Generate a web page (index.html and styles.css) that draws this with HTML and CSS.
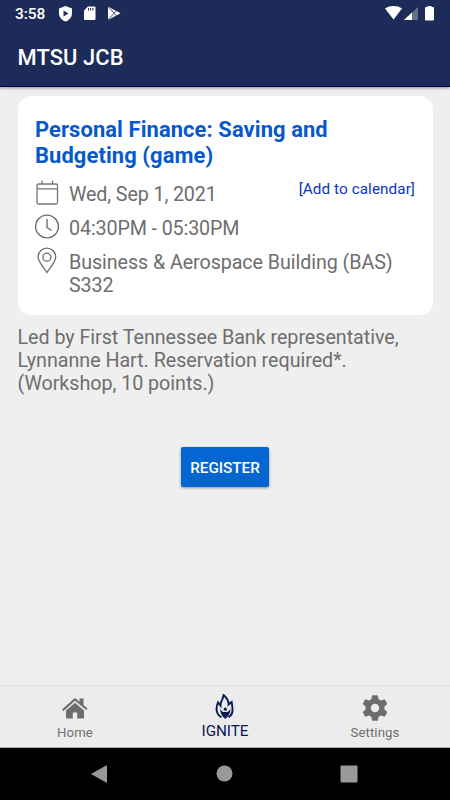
FILE: index.html
```html
<!DOCTYPE html>
<html lang="en">
<head>
<meta charset="utf-8">
<meta name="viewport" content="width=device-width, initial-scale=1">
<title>MTSU JCB</title>
<link rel="stylesheet" href="styles.css">
</head>
<body>
<div class="app">
  <header class="header">
    <div class="status">
      <span class="time">3:58</span>
      <svg class="status-left" width="64" height="16" viewBox="0 0 64 16" fill="#fff">
        <path d="M7.500 0 14 2.500V7c0 4.200-2.600 7.200-6.500 8.500C3.600 14.200 1 11.200 1 7V2.500z"/>
        <path d="M5.500 4.500v6l5-3z" fill="#1d2b59"/>
        <path d="M30 .5h6.500q1 0 1 1v11.500q0 1-1 1h-9.500q-1 0-1-1V4.500z"/>
        <path d="M30.500 2v2.500M32.700 2v2.500M34.900 2v2.500" stroke="#1d2b59" stroke-width="1"/>
        <path d="M50 .5 62.500 7.300 50 14z"/>
        <path d="m50 .5 8.500 9.500M50 14l8.500-9.500" stroke="#1d2b59" stroke-width=".8"/>
      </svg>
      <svg class="status-right" width="50" height="16" viewBox="0 0 50 16" fill="#fff">
        <path d="M0 2.500C4.500-.8 12.500-.8 17 2.500L8.500 13.500z"/>
        <path d="M33 1v13H19z" fill="#68708f"/>
        <path d="M27 6.500v7.500h-8z"/>
        <path d="M42.500 0h4v1H48q1 0 1 1v11.500q0 1-1 1h-7q-1 0-1-1V2q0-1 1-1h1.500z"/>
      </svg>
    </div>
    <h1 class="app-title">MTSU JCB</h1>
  </header>
  <main class="content">
    <section class="card">
      <h2 class="event-title">Personal Finance: Saving and<br>Budgeting (game)</h2>
      <div class="row date">
        <svg class="icon" width="26" height="28" viewBox="0 0 26 28" fill="none" stroke="#757575" stroke-width="1.300">
          <rect x="3" y="5" width="20.500" height="20" rx="1.500"/><path d="M3 9.800h20.500M8 1.500v3.500M18.500 1.500v3.500"/>
        </svg>
        <span class="text">Wed, Sep 1, 2021</span>
        <a class="add">[Add to calendar]</a>
      </div>
      <div class="row hours">
        <svg class="icon" width="26" height="28" viewBox="0 0 26 28" fill="none" stroke="#6c6c6c" stroke-width="1.400">
          <circle cx="13" cy="13.500" r="11.400"/><path d="M13 6v8.500l4.500 3"/>
        </svg>
        <span class="text">04:30PM - 05:30PM</span>
      </div>
      <div class="row place">
        <svg class="icon" width="26" height="28" viewBox="0 0 26 28" fill="none" stroke="#6c6c6c" stroke-width="1.300">
          <path d="M12.900 25.500C9.400 20.500 4.100 14.500 4.100 10a8.800 8.800 0 0 1 17.600 0c0 4.500-5.300 10.500-8.800 15.500z"/><circle cx="12.900" cy="10.200" r="4"/>
        </svg>
        <span class="text">Business &amp; Aerospace Building (BAS)<br>S332</span>
      </div>
    </section>
    <p class="description">Led by First Tennessee Bank representative,<br>Lynnanne Hart. Reservation required*.<br>(Workshop, 10 points.)</p>
    <button class="register">REGISTER</button>
  </main>
  <nav class="tabs">
    <a class="tab">
      <svg width="28" height="28" viewBox="0 0 28 28" fill="#6d6d6d">
        <path d="M1 15.500 13.200 4.500q.8-.7 1.600 0l3.700 3.200V4.500h4v6.600l4 3.400-1.300 1.600L14 6.700 2.300 17.200z"/>
        <path d="m14 8.800 9 7.700V23.500q0 1-1 1h-5.800v-6h-4.400v6H6q-1 0-1-1v-7z"/>
      </svg>
      <span>Home</span>
    </a>
    <a class="tab active">
      <svg width="28" height="28" viewBox="0 0 28 28" fill="#0b1a57">
        <path d="M10.500 23.300C5 20.500 4.500 14 7 8.300l2.500 3.200C9.300 7.500 12 5.500 12.600 1c3.200 3 5.300 5.500 5 9.500l3-2.500c.8 5.500 2.700 11.800-3 15.300" fill="none" stroke="#0b1a57" stroke-width="1.900"/>
        <path d="M9.100 14.500c.8 2.200 2.200 3.600 3.900 3.600h2.400c1.800 0 3-1.200 4-3.600.2 4.500-1.500 7.500-5.100 10.500-3.700-3-5.300-6-5.200-10.500z"/>
        <circle cx="14.300" cy="15.200" r="1.600"/>
      </svg>
      <span>IGNITE</span>
    </a>
    <a class="tab">
      <svg width="28" height="28" viewBox="0 0 28 28" fill="#6d6d6d" fill-rule="evenodd">
        <path d="M12 1.200h4q.9 0 1 .9l.5 3 2.400 1.400 2.900-1.100q.8-.3 1.200.4l2 3.500q.4.700-.2 1.300l-2.400 2v2.800l2.400 2q.6.600.2 1.300l-2 3.500q-.4.700-1.200.4l-2.900-1.100-2.400 1.400-.5 3q-.1.900-1 .9h-4q-.9 0-1-.9l-.5-3-2.400-1.400-2.900 1.100q-.8.300-1.200-.4l-2-3.500q-.4-.7.200-1.300l2.400-2v-2.800l-2.400-2q-.6-.6-.2-1.300l2-3.500q.4-.7 1.200-.4l2.900 1.100 2.400-1.400.5-3q.1-.9 1-.9zM14 9.800a4.200 4.200 0 1 0 0 8.400 4.200 4.200 0 0 0 0-8.400z"/>
      </svg>
      <span>Settings</span>
    </a>
  </nav>
  <div class="system-nav">
    <svg width="18" height="20" viewBox="0 0 18 20" fill="#999"><path d="M1 10 17 1v18z"/></svg>
    <svg width="18" height="18" viewBox="0 0 18 18" fill="#999"><circle cx="9.500" cy="8.500" r="8"/></svg>
    <svg width="18" height="18" viewBox="0 0 18 18" fill="#999"><rect x="0.500" y="0.500" width="17" height="17" rx="1"/></svg>
  </div>
</div>
</body>
</html>
```
FILE: styles.css
```css
* { box-sizing: border-box; }
body { margin: 0; font-family: Roboto, sans-serif; }
h1, h2, p { margin: 0; }
.app { width: 450px; height: 800px; display: flex; flex-direction: column; background: #efefef; overflow: hidden; }
.header { height: 87px; flex: none; background: #1d2b59; color: #fff; border-bottom: 1px solid #00004e; box-shadow: 0 1px 3px rgba(0,0,0,.4); }
.status { height: 26px; padding: 6px 15px 0; display: flex; align-items: flex-start; }
.time { font-size: 15.500px; line-height: 16px; font-weight: 500; letter-spacing: -.1px; width: 43px; }
.status-right { margin-left: auto; }
.app-title { padding: 19px 17.500px 0; font-size: 21.900px; line-height: 26px; font-weight: 500; letter-spacing: .1px; }
.content { flex: 1; padding: 9px 17.500px 0; display: flex; flex-direction: column; }
.card { height: 219px; flex: none; background: #fff; border-radius: 13px; padding: 21px 17.500px 0; }
.event-title { font-size: 21.900px; line-height: 26px; font-weight: 700; letter-spacing: .1px; color: #0559cc; height: 62px; }
.row { display: flex; align-items: flex-start; font-size: 19.700px; line-height: 23px; color: #6e6e6e; letter-spacing: -.07px; }
.row .icon { flex: none; margin-left: -1px; }
.row .text { margin-left: 9px; padding-top: 4px; white-space: nowrap; }
.date .text, .hours .text { letter-spacing: -.12px; }
.date, .hours { height: 34px; }
.row .add { margin-left: auto; font-size: 15.300px; line-height: 18px; padding-top: 1px; letter-spacing: .06px; color: #0a35c8; white-space: nowrap; }
.description { padding-top: 11px; font-size: 19.700px; line-height: 23px; color: #6e6e6e; letter-spacing: -.03px; white-space: nowrap; }
.register { align-self: center; margin-top: 52px; width: 88px; height: 40px; padding: 1px 0 0; border: 0; border-radius: 2px; background: #0566d1; color: #fff; font: 500 15.300px/40px Roboto, sans-serif; letter-spacing: -.05px; box-shadow: 0 1px 3px rgba(0,0,0,.4); }
.tabs { height: 63px; flex: none; display: grid; grid-template-columns: repeat(3, 1fr); background: #ececec; border-top: 1px solid #e0e0e0; border-bottom: 1px solid #aaa; }
.tab { display: flex; flex-direction: column; align-items: center; padding-top: 8px; color: #6e6e6e; font-size: 13.200px; letter-spacing: .1px; line-height: 16px; }
.tab span { padding-top: 3px; }
.active { color: #0b1652; font-size: 15.300px; letter-spacing: -.05px; }
.active span { padding-top: 1px; }
.system-nav { height: 52px; flex: none; background: #000; display: flex; align-items: center; justify-content: space-between; padding: 0 92px 0 90px; }
```
